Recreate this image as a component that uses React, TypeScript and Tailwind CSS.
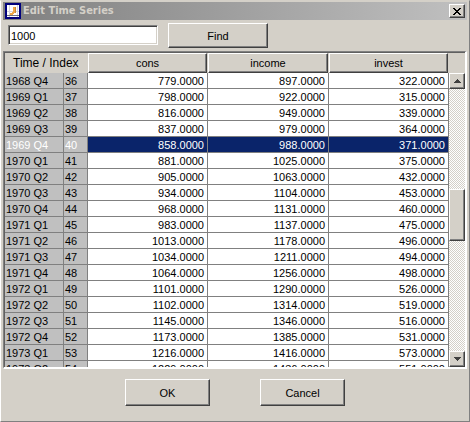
import React from "react";

type Row = [string, number, number, number, number];

const rows: Row[] = [
  ["1968 Q4", 36, 779, 897, 322],
  ["1969 Q1", 37, 798, 922, 315],
  ["1969 Q2", 38, 816, 949, 339],
  ["1969 Q3", 39, 837, 979, 364],
  ["1969 Q4", 40, 858, 988, 371],
  ["1970 Q1", 41, 881, 1025, 375],
  ["1970 Q2", 42, 905, 1063, 432],
  ["1970 Q3", 43, 934, 1104, 453],
  ["1970 Q4", 44, 968, 1131, 460],
  ["1971 Q1", 45, 983, 1137, 475],
  ["1971 Q2", 46, 1013, 1178, 496],
  ["1971 Q3", 47, 1034, 1211, 494],
  ["1971 Q4", 48, 1064, 1256, 498],
  ["1972 Q1", 49, 1101, 1290, 526],
  ["1972 Q2", 50, 1102, 1314, 519],
  ["1972 Q3", 51, 1145, 1346, 516],
  ["1972 Q4", 52, 1173, 1385, 531],
  ["1973 Q1", 53, 1216, 1416, 573],
  ["1973 Q2", 54, 1229, 1436, 551],
];

const COLS = "grid grid-cols-[59px_24px_120px_121px_120px]";
const RAISED =
  "border border-t-white border-l-white border-r-[#404040] border-b-[#404040] bg-[#d4d0c8] shadow-[inset_-1px_-1px_0_#808080]";

function Button({ className, children }: { className: string; children: React.ReactNode }) {
  return (
    <button className={`${RAISED} flex items-center justify-center ${className}`}>{children}</button>
  );
}

function HeaderCell({ children }: { children: React.ReactNode }) {
  return (
    <div className="border-r border-[#d4d0c8]">
      <div className={`${RAISED} flex h-5 items-center justify-center`}>{children}</div>
    </div>
  );
}

function ScrollButton({ down = false }: { down?: boolean }) {
  return (
    <button className={`${RAISED} flex h-4 w-4 items-center justify-center`}>
      <svg width="7" height="4" viewBox="0 0 7 4" shapeRendering="crispEdges" fill="#404040">
        <path d={down ? "M0 0h7v1h-1v1h-1v1h-1v1h-1v-1h-1v-1h-1v-1h-1z" : "M3 0h1v1h1v1h1v1h1v1h-7v-1h1v-1h1v-1h1z"} />
      </svg>
    </button>
  );
}

function TitleBar() {
  return (
    <div className="mx-[2px] flex h-[18px] items-center bg-linear-to-r from-[#808080] to-[#c0c0c0] px-[2px]">
      <svg className="shrink-0" width="16" height="16" viewBox="0 0 16 16" shapeRendering="crispEdges">
        <path fill="#00007c" d="M0 0h16v16H0z" />
        <path fill="#fff" d="M2 2h12v12H2z" />
        <path fill="#d4d4dc" d="M4 2h1v12h-1zM2 8h12v1H2zM12 2h1v12h-1z" />
        <path fill="#70707c" d="M2 12h12v1H2z" />
        <path fill="#f0a848" d="M8 4h2v6h-1v1h-1v1h-3v-2h2v-1h1z" />
        <path fill="#c88838" d="M10 4h1v6h-1z" />
      </svg>
      <span className="ml-[2px] flex-1 whitespace-nowrap font-['DejaVu_Sans_Condensed','DejaVu_Sans',sans-serif] text-[11px] font-bold leading-[18px] text-[#d4d0c8]">
        Edit Time Series
      </span>
      <Button className="h-[14px] w-4">
        <svg width="8" height="7" viewBox="0 0 8 7" shapeRendering="crispEdges" fill="#000">
          <path d="M0 0h2v1h1v1h2v-1h1v-1h2v1h-1v1h-1v1h-1v1h1v1h1v1h1v1h-2v-1h-1v-1h-2v1h-1v1h-2v-1h1v-1h1v-1h1v-1h-1v-1h-1v-1h-1z" />
        </svg>
      </Button>
    </div>
  );
}

export default function App() {
  return (
    <div className="flex h-[422px] w-[470px] flex-col border-t border-r border-b border-l border-t-[#d4d0c8] border-r-[#808080] border-b-[#808080] border-l-white bg-[#d4d0c8] pt-px font-['Liberation_Sans',Arial,sans-serif] text-[11px] leading-[15px] text-black">
      <TitleBar />
      <div className="flex h-[31px] pl-[7px] pt-[3px]">
        <input
          className="mt-[2px] h-5 w-[150px] border border-t-[#808080] border-l-[#808080] border-r-white border-b-white bg-white pl-[2px] pt-[2px] shadow-[inset_1px_1px_0_#404040,inset_-1px_-1px_0_#d4d0c8] outline-none"
          defaultValue="1000"
        />
        <Button className="ml-[10px] h-[25px] w-[100px] pt-px">Find</Button>
      </div>
      <div className="ml-[2px] h-[318px] w-[464px] border-l border-t border-r-2 border-b-2 border-l-[#808080] border-t-[#808080] border-r-white border-b-white">
        <div className="flex h-[315px] border-l border-t border-[#606060]">
          <div className="flex flex-1 flex-col overflow-hidden">
            <div className="grid h-5 shrink-0 grid-cols-[83px_120px_121px_120px]">
              <div className="pl-2 pt-[3px] text-xs leading-[15px]">Time / Index</div>
              <HeaderCell>cons</HeaderCell>
              <HeaderCell>income</HeaderCell>
              <HeaderCell>invest</HeaderCell>
            </div>
            <div className="h-[294px] overflow-hidden">
              {rows.map(([time, index, ...values]) => {
                const selected = index === 40;
                return (
                  <div key={index} className={`${COLS} h-4`}>
                    {[time, index].map((label) => (
                      <div
                        key={label}
                        className={`h-4 border-r border-b border-[#808080] bg-[#c0c0c0] pl-px pt-px ${selected ? "text-white" : ""}`}
                      >
                        {label}
                      </div>
                    ))}
                    {values.map((value, i) => (
                      <div
                        key={i}
                        className={`h-4 border-r border-b border-[#808080] pr-[3px] pt-px text-right ${selected ? "bg-[#0a246a] text-white" : "bg-white"}`}
                      >
                        {value.toFixed(4)}
                      </div>
                    ))}
                  </div>
                );
              })}
            </div>
          </div>
          <div className="mt-5 flex w-4 flex-col bg-[repeating-conic-gradient(#fff_0_25%,#d4d0c8_0_50%)] bg-size-[2px_2px]">
            <ScrollButton />
            <div className={`${RAISED} mt-[100px] h-[52px]`} />
            <div className="flex-1" />
            <ScrollButton down />
          </div>
        </div>
      </div>
      <div className="flex gap-[50px] pl-[124px] pt-[10px]">
        <Button className="h-[27px] w-[85px] pt-px">OK</Button>
        <Button className="h-[27px] w-[85px] pt-px">Cancel</Button>
      </div>
    </div>
  );
}
